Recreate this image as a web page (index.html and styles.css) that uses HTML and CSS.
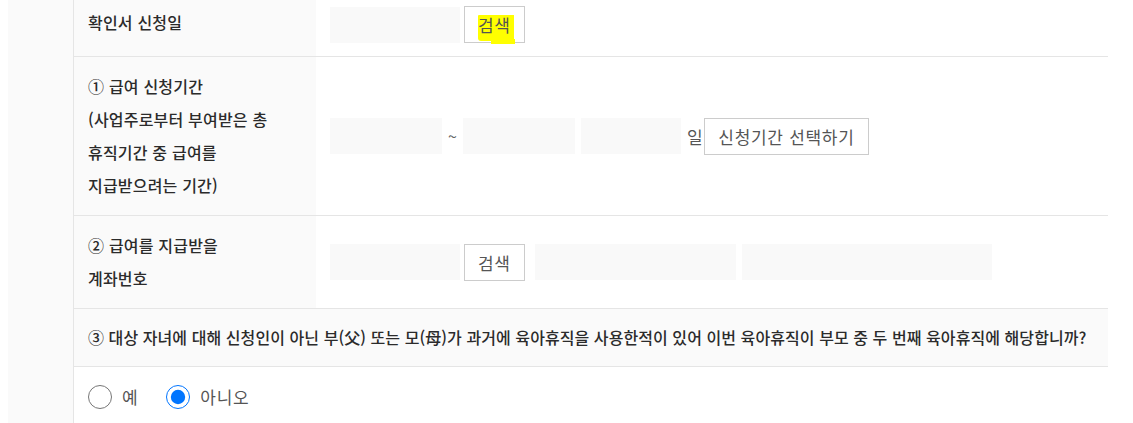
FILE: index.html
```html
<!DOCTYPE html>
<html lang="ko">
<head>
<meta charset="utf-8">
<link rel="stylesheet" href="styles.css">
</head>
<body>
<div class="page">
  <div class="side"></div>
  <div class="form">
    <div class="row">
      <div class="th">확인서 신청일</div>
      <div class="td">
        <span class="inp w130"></span>
        <button class="btn ml4"><span class="hl">검색</span></button>
      </div>
    </div>
    <div class="row">
      <div class="th">① 급여 신청기간<br>(사업주로부터 부여받은 총<br>휴직기간 중 급여를<br>지급받으려는 기간)</div>
      <div class="td">
        <span class="inp w112"></span>
        <span class="tilde">~</span>
        <span class="inp w112"></span>
        <span class="inp w100 ml6"></span>
        <span class="unit">일</span>
        <button class="btn">신청기간 선택하기</button>
      </div>
    </div>
    <div class="row">
      <div class="th">② 급여를 지급받을<br>계좌번호</div>
      <div class="td">
        <span class="inp w130"></span>
        <button class="btn ml4">검색</button>
        <span class="inp w201 ml10"></span>
        <span class="inp w250 ml6"></span>
      </div>
    </div>
    <div class="row q">
      <div class="qtext">③ 대상 자녀에 대해 신청인이 아닌 부(父) 또는 모(母)가 과거에 육아휴직을 사용한적이 있어 이번 육아휴직이 부모 중 두 번째 육아휴직에 해당합니까?</div>
    </div>
    <div class="row ans">
      <label class="opt"><input type="radio" name="second"> <span>예</span></label>
      <label class="opt"><input type="radio" name="second" checked> <span>아니오</span></label>
    </div>
  </div>
</div>
</body>
</html>
```

FILE: styles.css
```css
html, body {
  margin: 0;
  padding: 0;
  background: #fff;
}
body {
  font-family: "Noto Sans CJK KR", "Noto Sans", sans-serif;
  font-size: 17px;
  letter-spacing: 0.7px;
  color: #555;
  overflow: hidden;
}
.page {
  display: flex;
  margin-top: -7px;
  height: 440px;
}
.side {
  width: 65px;
  margin-left: 8px;
  background: #fafafa;
  border-right: 1px solid #e5e5e5;
}
.form {
  width: 1034px;
}
.row {
  display: flex;
  border-bottom: 1px solid #e5e5e5;
}
.th {
  width: 214px;
  flex: none;
  background: #fafafa;
  padding: 13px 14px;
  font-size: 16px;
  line-height: 33px;
  color: #2b2b2b;
  font-weight: 500;
  letter-spacing: 0.2px;
}
.td {
  flex: 1;
  display: flex;
  align-items: center;
  padding: 13px 14px;
}
.inp {
  display: block;
  height: 36px;
  background: #f9f9f9;
  flex: none;
}
.w130 { width: 130px; }
.w112 { width: 112px; }
.w100 { width: 100px; }
.w201 { width: 201px; }
.w250 { width: 250px; }
.ml4 { margin-left: 4px; }
.ml6 { margin-left: 6px; }
.ml10 { margin-left: 10px; }
.tilde {
  width: 21px;
  text-align: center;
  color: #666;
  font-size: 16px;
  letter-spacing: 0;
}
.unit {
  margin: 0 1px 0 6px;
  color: #555;
}
.btn {
  height: 37px;
  padding: 0 13px;
  border: 1px solid #ccc;
  background: #fff;
  color: #555;
  font-family: inherit;
  font-size: 17px;
  letter-spacing: 0.7px;
  line-height: 35px;
}
.hl {
  position: relative;
  z-index: 0;
}
.hl::before {
  content: "";
  position: absolute;
  left: 0;
  right: -3px;
  top: 3px;
  bottom: -4px;
  background: #ffff00;
  z-index: -1;
  border-radius: 1px 0 2px 3px;
}
.hl::after {
  content: "";
  position: absolute;
  left: 13px;
  right: -4px;
  bottom: -7px;
  height: 5px;
  background: #ffff00;
  z-index: -1;
}
.q {
  background: #fafafa;
}
.qtext {
  padding: 12px 14px;
  font-size: 16px;
  line-height: 33px;
  color: #2b2b2b;
  font-weight: 500;
  letter-spacing: 0.07px;
}
.ans {
  border-bottom: none;
  padding: 13px 14px;
  align-items: center;
  line-height: 33px;
}
.opt {
  display: flex;
  align-items: center;
  margin-right: 28px;
  color: #555;
}
.opt input {
  width: 24px;
  height: 24px;
  margin: 0 10px 0 0;
}
```
